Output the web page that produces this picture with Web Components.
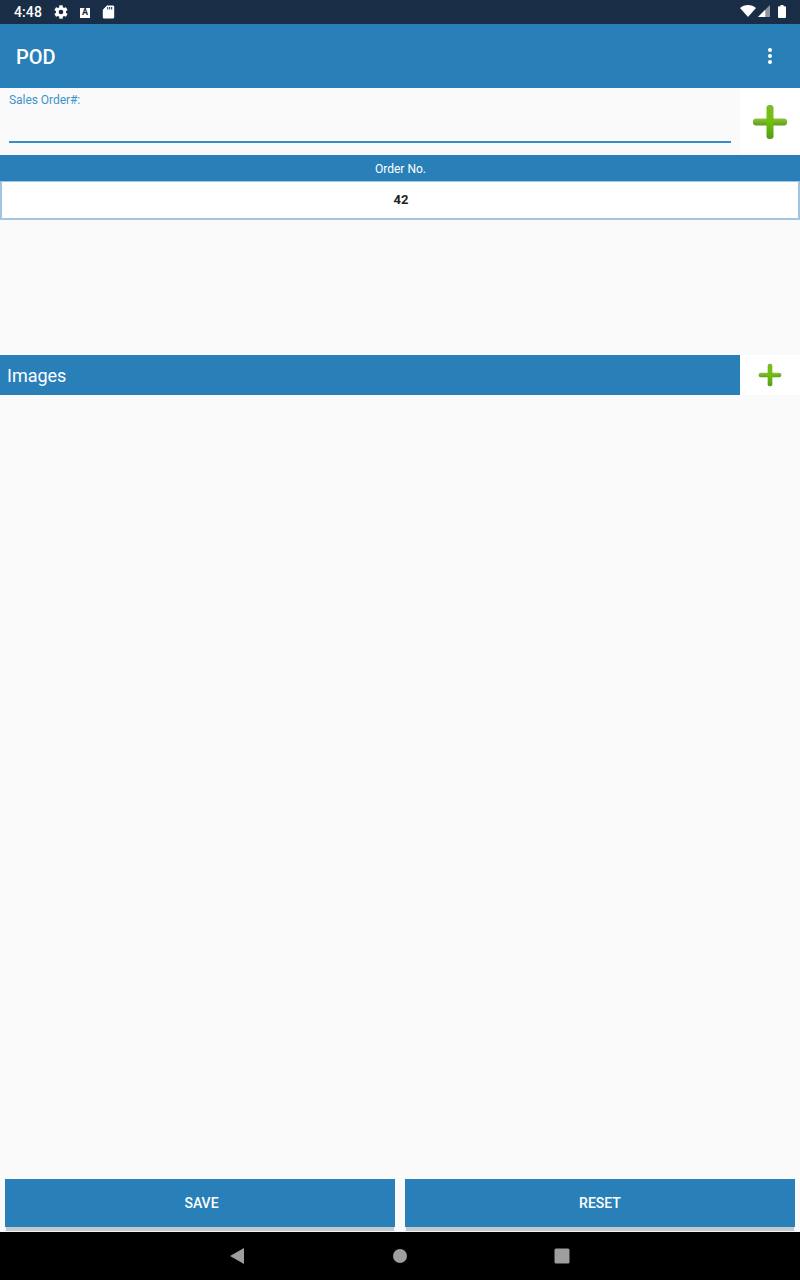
<!DOCTYPE html>
<html>
<head>
<meta charset="utf-8">
<title>POD</title>
<style>
  html, body { margin: 0; height: 100%; }
  body { background: #fafafa; font-family: Roboto, "Liberation Sans", sans-serif; }
</style>
</head>
<body>
<pod-screen>
  <status-bar slot="status"></status-bar>
  <app-bar slot="bar" title="POD"></app-bar>
  <order-field slot="main" label="Sales Order#:"></order-field>
  <order-table slot="main" heading="Order No." value="42"></order-table>
  <images-header slot="main" heading="Images"></images-header>
  <action-bar slot="actions">
    <action-button style="--label-shift: 3px">SAVE</action-button>
    <action-button>RESET</action-button>
  </action-bar>
  <nav-bar slot="nav"></nav-bar>
</pod-screen>

<script>
const plusIcon = (size) => `
  <svg width="${size}" height="${size}" viewBox="0 0 36 36" aria-hidden="true">
    <defs>
      <linearGradient id="v" x1="0" y1="0" x2="0" y2="1">
        <stop offset="0" stop-color="#7dbb2a"/>
        <stop offset="0.5" stop-color="#6fc00c"/>
        <stop offset="1" stop-color="#559a18"/>
      </linearGradient>
      <linearGradient id="h" x1="0" y1="0" x2="0" y2="1">
        <stop offset="0" stop-color="#8cc63a"/>
        <stop offset="1" stop-color="#5c9f14"/>
      </linearGradient>
      <filter id="soft" x="-10%" y="-10%" width="120%" height="120%"><feGaussianBlur stdDeviation="0.6"/></filter>
    </defs>
    <g filter="url(#soft)">
      <rect x="1" y="14.500" width="34" height="7" rx="3" fill="url(#h)"/>
      <rect x="14.500" y="1" width="7" height="34" rx="3" fill="url(#v)"/>
    </g>
  </svg>`;

class PodScreen extends HTMLElement {
  constructor() {
    super();
    this.attachShadow({ mode: "open" });
    this.shadowRoot.innerHTML = `
      <style>
        :host { display: flex; flex-direction: column; height: 1280px; }
        main { flex: 1; display: flex; flex-direction: column; min-height: 0; }
      </style>
      <slot name="status"></slot>
      <slot name="bar"></slot>
      <main><slot name="main"></slot></main>
      <slot name="actions"></slot>
      <slot name="nav"></slot>
    `;
  }
}

class StatusBar extends HTMLElement {
  constructor() {
    super();
    this.attachShadow({ mode: "open" });
    this.shadowRoot.innerHTML = `
      <style>
        :host { display: flex; align-items: center; height: 24px; background: #1a2d46; color: #fff; padding: 0 14px; box-sizing: border-box; }
        .time { font: 500 14px/24px Roboto, sans-serif; width: 28px; margin-right: 11px; letter-spacing: 0.1px; }
        .left { display: flex; align-items: center; gap: 8px; }
        .right { margin-left: auto; display: flex; align-items: center; padding-bottom: 2px; }
        .ime { width: 10px; height: 10px; margin-left: 3px; margin-top: 1px; background: #fff; color: #1a2d46; font: 700 9px/9px Roboto, sans-serif; text-align: center; overflow: hidden; }
        svg { display: block; }
      </style>
      <span class="time">4:48</span>
      <div class="left">
        <svg width="16" height="16" viewBox="0 0 24 24"><path fill="#fff" d="M19.400 13c.04-.32.07-.66.07-1s-.03-.68-.07-1l2.100-1.650c.2-.15.25-.42.12-.64l-2-3.460c-.12-.22-.4-.3-.6-.22l-2.500 1c-.52-.4-1.080-.73-1.700-.98l-.37-2.650A.5.5 0 0 0 14 2h-4a.5.5 0 0 0-.5.42l-.37 2.650c-.62.25-1.180.58-1.700.98l-2.500-1c-.22-.08-.48 0-.6.22l-2 3.460c-.13.22-.07.49.12.64L4.550 11c-.04.32-.07.66-.07 1s.03.68.07 1l-2.100 1.650c-.2.15-.25.42-.12.64l2 3.460c.12.22.4.3.6.22l2.500-1c.52.4 1.080.73 1.700.98l.37 2.650c.04.24.25.42.5.42h4c.25 0 .46-.18.5-.42l.37-2.650c.62-.25 1.180-.58 1.700-.98l2.500 1c.22.08.48 0 .6-.22l2-3.460c.13-.22.07-.49-.12-.64L19.400 13zM12 15.500a3.500 3.500 0 1 1 0-7 3.500 3.500 0 0 1 0 7z"/></svg>
        <span class="ime">A</span>
        <svg width="16" height="16" viewBox="0 0 16 16" style="margin-left:2px"><path fill="#fff" fill-rule="evenodd" d="M7 1.500h6a1.200 1.200 0 0 1 1.200 1.200v10.600a1.200 1.200 0 0 1-1.200 1.200H4a1.200 1.200 0 0 1-1.200-1.200V5.700zM7.200 3v2.600h1V3zm2 0v2.600h1V3zm2 0v2.600h1V3z"/></svg>
      </div>
      <div class="right">
        <svg width="16" height="12" viewBox="0 0 16 12" style="margin-right:2px"><path fill="#fff" d="M0 3C2.200 1.100 5 0 8 0s5.800 1.100 8 3L8 12z"/></svg>
        <svg width="12" height="12" viewBox="0 0 12 12" style="margin-right:8px"><path fill="#8e959e" d="M12 0v12H0z"/><path fill="#fff" d="M7.300 4.800V12H0z"/></svg>
        <svg width="8" height="13" viewBox="0 0 8 13"><path fill="#fff" d="M2.500 0h3v1.300H7a1 1 0 0 1 1 1V12a1 1 0 0 1-1 1H1a1 1 0 0 1-1-1V2.300a1 1 0 0 1 1-1h1.500z"/></svg>
      </div>
    `;
  }
}

class AppBar extends HTMLElement {
  constructor() {
    super();
    this.attachShadow({ mode: "open" });
  }
  connectedCallback() {
    this.shadowRoot.innerHTML = `
      <style>
        :host { display: flex; align-items: center; height: 64px; background: #2980b9; color: #fff; padding: 0 16px; box-sizing: border-box; }
        h1 { margin: 2px 0 0; font: 500 20px/24px Roboto, sans-serif; }
        .menu { margin-left: auto; display: flex; flex-direction: column; gap: 2px; margin-right: 12px; }
        .menu i { display: block; width: 4px; height: 4px; border-radius: 50%; background: #fff; }
      </style>
      <h1>${this.getAttribute("title")}</h1>
      <div class="menu"><i></i><i></i><i></i></div>
    `;
  }
}

class OrderField extends HTMLElement {
  constructor() {
    super();
    this.attachShadow({ mode: "open" });
  }
  connectedCallback() {
    this.shadowRoot.innerHTML = `
      <style>
        :host { display: flex; height: 67px; box-sizing: border-box; }
        .field { flex: 1; margin: 0 9px; height: 55px; border-bottom: 2px solid #3a8cc4; box-sizing: border-box; color: #3d94cc; font: 400 12px/14px Roboto, sans-serif; letter-spacing: -0.05px; padding-top: 5px; }
        .add { width: 60px; height: 67px; background: #fff; display: flex; align-items: center; justify-content: center; box-sizing: border-box; }
        svg { display: block; }
      </style>
      <div class="field">${this.getAttribute("label")}</div>
      <div class="add">${plusIcon(36)}</div>
    `;
  }
}

class OrderTable extends HTMLElement {
  constructor() {
    super();
    this.attachShadow({ mode: "open" });
  }
  connectedCallback() {
    this.shadowRoot.innerHTML = `
      <style>
        :host { display: block; height: 200px; }
        .head { height: 26px; background: #2980b9; color: #fff; font: 400 12px/28px Roboto, sans-serif; text-align: center; padding-left: 1px; }
        .row { height: 39px; box-sizing: border-box; background: #fff; border: 2px solid #a3c6de; border-top-width: 1px; color: #212121; font: 700 13px/36px Roboto, sans-serif; text-align: center; padding-left: 2px; }
      </style>
      <div class="head">${this.getAttribute("heading")}</div>
      <div class="row">${this.getAttribute("value")}</div>
    `;
  }
}

class ImagesHeader extends HTMLElement {
  constructor() {
    super();
    this.attachShadow({ mode: "open" });
  }
  connectedCallback() {
    this.shadowRoot.innerHTML = `
      <style>
        :host { display: flex; height: 40px; }
        .title { flex: 1; background: #2980b9; color: #fff; font: 400 18px/42px Roboto, sans-serif; padding-left: 7px; }
        .add { width: 60px; background: #fff; display: flex; align-items: center; justify-content: center; }
        svg { display: block; }
      </style>
      <div class="title">${this.getAttribute("heading")}</div>
      <div class="add">${plusIcon(24)}</div>
    `;
  }
}

class ActionBar extends HTMLElement {
  constructor() {
    super();
    this.attachShadow({ mode: "open" });
    this.shadowRoot.innerHTML = `
      <style>
        :host { display: flex; gap: 10px; padding: 0 5px; height: 53px; box-sizing: border-box; }
        ::slotted(*) { flex: 1; }
      </style>
      <slot></slot>
    `;
  }
}

class ActionButton extends HTMLElement {
  constructor() {
    super();
    this.attachShadow({ mode: "open" });
    this.shadowRoot.innerHTML = `
      <style>
        :host { display: block; height: 53px; box-sizing: border-box; }
        button { display: block; width: 100%; height: 48px; border: 0; padding: 0 0 0 var(--label-shift, 0); background: #2980b9; color: #fff; font: 500 14px/48px Roboto, sans-serif; box-shadow: 0 5px 1px -1px #c4c9cd; }
      </style>
      <button type="button"><slot></slot></button>
    `;
  }
}

class NavBar extends HTMLElement {
  constructor() {
    super();
    this.attachShadow({ mode: "open" });
    this.shadowRoot.innerHTML = `
      <style>
        :host { display: flex; height: 48px; background: #000; align-items: center; justify-content: center; gap: 146px; padding-right: 1px; box-sizing: border-box; }
        svg { display: block; }
        .back { margin-right: 1px; }
      </style>
      <svg class="back" width="16" height="16" viewBox="0 0 16 16"><path fill="#9e9e9e" d="M15 0v16L1 8z"/></svg>
      <svg width="16" height="16" viewBox="0 0 16 16"><circle cx="8" cy="8" r="7" fill="#9e9e9e"/></svg>
      <svg width="16" height="16" viewBox="0 0 16 16"><rect x="0.500" y="0.500" width="15" height="15" rx="1.500" fill="#9e9e9e"/></svg>
    `;
  }
}

customElements.define("pod-screen", PodScreen);
customElements.define("status-bar", StatusBar);
customElements.define("app-bar", AppBar);
customElements.define("order-field", OrderField);
customElements.define("order-table", OrderTable);
customElements.define("images-header", ImagesHeader);
customElements.define("action-bar", ActionBar);
customElements.define("action-button", ActionButton);
customElements.define("nav-bar", NavBar);
</script>
</body>
</html>
